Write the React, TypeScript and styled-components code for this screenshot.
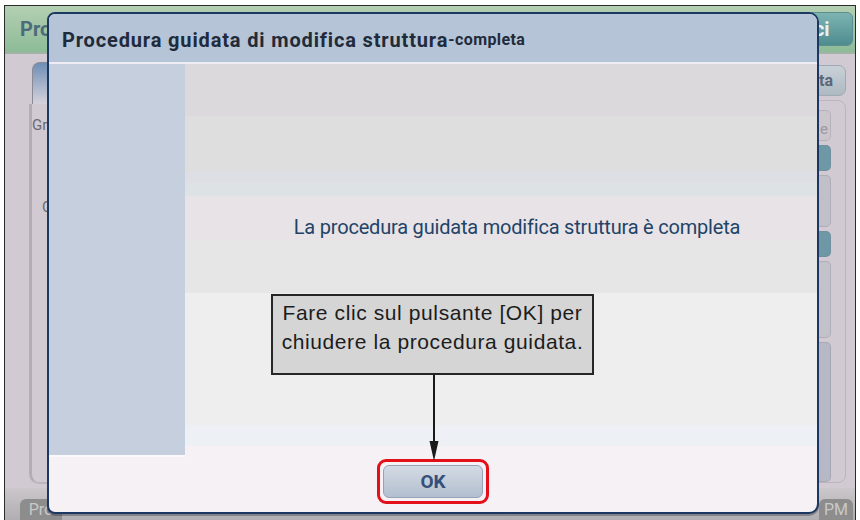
import styled, { createGlobalStyle } from 'styled-components'

const GlobalStyle = createGlobalStyle`
  html, body {
    margin: 0;
    padding: 0;
    background: #ffffff;
  }
  body {
    font-family: Roboto, "Liberation Sans", sans-serif;
  }
  * {
    box-sizing: border-box;
  }
`

// --- background application (mostly hidden by the dialog) ---

const Screen = styled.div`
  position: relative;
  width: 860px;
  height: 520px;
  padding: 5px 4px 0 4px;
  overflow: hidden;
`

const Device = styled.div`
  display: flex;
  flex-direction: column;
  height: 515px;
  border: 1px solid #2b2b2b;
  border-bottom: none;
  background: #d2cad2;
`

const Header = styled.header`
  height: 48px;
  flex: none;
  display: flex;
  align-items: center;
  justify-content: space-between;
  padding: 0 2px 0 15px;
  background: linear-gradient(#b4cfb3, #8dbb97);
  border-bottom: 2px solid #a2b4a6;
`

const HeaderTitle = styled.div`
  white-space: nowrap;
  font-weight: 700;
  font-size: 20px;
  color: #4d6b7b;
`

const ExitButton = styled.div`
  width: 84px;
  height: 34px;
  display: flex;
  align-items: center;
  justify-content: center;
  border-radius: 6px;
  border: 1px solid #5e8f90;
  background: linear-gradient(#7db4b2, #4e8c90);
  color: #e8f0f2;
  font-weight: 700;
  font-size: 20px;
`

const Main = styled.div`
  flex: 1;
  display: flex;
`

const LeftPane = styled.div`
  width: 44px;
  display: flex;
  flex-direction: column;
  padding: 8px 0 4px 24px;
`

const Tab = styled.div`
  height: 42px;
  width: 40px;
  margin-left: 3px;
  border: 1px solid #8a8a96;
  border-bottom: none;
  border-radius: 8px 8px 0 0;
  background: linear-gradient(#6f8fb6, #d6d2dc);
`

const LeftPanel = styled.div`
  flex: 1;
  border-left: 3px solid #b3aeb4;
  border-bottom: 2px solid #bbb6bc;
  border-radius: 0 0 0 10px;
  padding: 12px 0 0 0;
  display: flex;
  flex-direction: column;
  gap: 64px;
  white-space: nowrap;
`

const Label = styled.div<{ $indent?: number }>`
  font-size: 15px;
  color: #6a6a72;
  padding-left: ${(p) => p.$indent ?? 0}px;
`

const Middle = styled.div`
  flex: 1;
`

const RightPane = styled.div`
  width: 80px;
  display: flex;
  flex-direction: column;
  gap: 4px;
  padding: 11px 9px 0 0;
`

const SmallButton = styled.div`
  height: 31px;
  display: flex;
  align-items: center;
  justify-content: flex-end;
  padding-right: 12px;
  border-radius: 7px;
  border: 1px solid #9eaab4;
  background: linear-gradient(#c9d0d8, #aeb9c2);
  color: #5a6878;
  font-weight: 700;
  font-size: 16px;
  white-space: nowrap;
`

const SidePanel = styled.div`
  height: 383px;
  border: 1px solid #bdb5bd;
  border-radius: 8px;
  padding: 9px 14px 0 0;
  display: flex;
  flex-direction: column;
  gap: 4px;
`

const Block = styled.div<{ $h: number; $bg: string; $fg?: string }>`
  height: ${(p) => p.$h}px;
  background: ${(p) => p.$bg};
  border-radius: 5px;
  border: 1px solid rgba(120, 120, 140, 0.25);
  color: ${(p) => p.$fg ?? 'transparent'};
  font-size: 15px;
  display: flex;
  align-items: flex-end;
  justify-content: flex-end;
  padding: 0 2px 2px 0;
`

const Footer = styled.footer`
  height: 32px;
  flex: none;
  display: flex;
  justify-content: space-between;
  align-items: flex-end;
  padding: 0 2px 0 15px;
  background: linear-gradient(#cbc7cb, #b0aeb0);
`

const FooterTab = styled.div<{ $w: number }>`
  width: ${(p) => p.$w}px;
  height: 21px;
  border-radius: 6px 6px 0 0;
  background: #8d8d8d;
  color: #c9c9c9;
  font-size: 16px;
  display: flex;
  align-items: center;
  justify-content: center;
`

// --- dialog ---

const Dialog = styled.section`
  position: absolute;
  left: 47px;
  top: 12px;
  width: 772px;
  height: 502px;
  display: flex;
  flex-direction: column;
  border: 2px solid #1c3762;
  border-radius: 8px 10px 10px 8px;
  overflow: hidden;
  background: #f5f1f5;
  box-shadow: 0 2px 0 rgba(40, 40, 60, 0.35);
`

const TitleBar = styled.div`
  height: 50px;
  flex: none;
  display: flex;
  align-items: center;
  padding: 3px 0 0 13px;
  background: #b5c4d6;
  border-bottom: 2px solid #efecf3;
  color: #1f2b3b;
  font-weight: 700;
  white-space: nowrap;
`

const TitleMain = styled.span`
  font-size: 20px;
  letter-spacing: 0.85px;
`

const TitleSub = styled.span`
  font-size: 16px;
  letter-spacing: 0.4px;
`

const Body = styled.div`
  height: 393px;
  flex: none;
  display: flex;
  border-bottom: 2px solid #fbf9fb;
`

const Sidebar = styled.aside`
  width: 136px;
  background: #c5cfdd;
`

const Content = styled.div`
  flex: 1;
  display: flex;
  flex-direction: column;
`

const Band = styled.div<{ $h: number; $bg: string }>`
  height: ${(p) => p.$h}px;
  flex: none;
  background: ${(p) => p.$bg};
`

const MessageBand = styled(Band)`
  display: flex;
  align-items: center;
  justify-content: center;
  padding: 17px 0 0 32px;
  color: #1f4468;
  font-size: 20px;
  letter-spacing: -0.2px;
`

const ButtonRow = styled.div`
  flex: 1;
  display: flex;
  justify-content: center;
  align-items: flex-start;
  padding-top: 2px;
`

const Highlight = styled.div`
  padding: 3px;
  border: 3px solid #e3101a;
  border-radius: 9px;
`

const OkButton = styled.button`
  width: 100px;
  height: 33px;
  border: 1px solid #93a3b8;
  border-radius: 6px;
  background: linear-gradient(#d3dae4, #b3bfcf);
  color: #34507a;
  font-family: Roboto, "Liberation Sans", sans-serif;
  font-weight: 700;
  font-size: 19px;
  padding: 0;
`

// annotation laid over the dialog
const Callout = styled.div`
  position: absolute;
  left: 222px;
  top: 280px;
  width: 323px;
  display: flex;
  flex-direction: column;
  align-items: center;
  z-index: 2;
`

const CalloutBox = styled.div`
  width: 323px;
  height: 81px;
  padding-top: 2px;
  border: 2px solid #262626;
  background: #d5d5d5;
  color: #1c1c1c;
  font-family: "Liberation Sans", Arial, sans-serif;
  font-size: 21px;
  letter-spacing: 0.6px;
  line-height: 29px;
  text-align: center;
`

const Arrow = () => (
  <svg width="12" height="86" viewBox="0 0 12 86" style={{ display: 'block', marginLeft: 3 }}>
    <line x1="6" y1="0" x2="6" y2="70" stroke="#1a1a1a" strokeWidth="2" />
    <polygon points="1.5,66 10.5,66 6,86" fill="#1a1a1a" />
  </svg>
)

const bands = [
  { h: 52, bg: '#dcd9dc' },
  { h: 55, bg: '#dfdedf' },
  { h: 12, bg: '#dedfe5' },
  { h: 13, bg: '#dde2e5' },
]

const lowerBands = [
  { h: 52, bg: '#e6e6e6' },
  { h: 132, bg: '#eeeeee' },
  { h: 21, bg: '#edf1f6' },
  { h: 11, bg: '#f5f1f5' },
]

export default function App() {
  return (
    <>
      <GlobalStyle />
      <Screen>
        <Device>
          <Header>
            <HeaderTitle>Pro</HeaderTitle>
            <ExitButton>Esci</ExitButton>
          </Header>
          <Main>
            <LeftPane>
              <Tab />
              <LeftPanel>
                <Label>Gr</Label>
                <Label $indent={10}>C</Label>
              </LeftPanel>
            </LeftPane>
            <Middle />
            <RightPane>
              <SmallButton>Lista</SmallButton>
              <SidePanel>
                <Block $h={31} $bg="#cbc6cc" $fg="#9a98a0">e</Block>
                <Block $h={26} $bg="#6f98a6" />
                <Block $h={52} $bg="#c1bfc8" />
                <Block $h={26} $bg="#6f98a6" />
                <Block $h={78} $bg="#c3c1c9" />
                <Block $h={140} $bg="#b6b9c5" />
              </SidePanel>
            </RightPane>
          </Main>
          <Footer>
            <FooterTab $w={42}>Pro</FooterTab>
            <FooterTab $w={34}>PM</FooterTab>
          </Footer>
        </Device>

        <Dialog>
          <TitleBar>
            <TitleMain>Procedura guidata di modifica struttura</TitleMain>
            <TitleSub>-completa</TitleSub>
          </TitleBar>
          <Body>
            <Sidebar />
            <Content>
              {bands.map((b, i) => (
                <Band key={i} $h={b.h} $bg={b.bg} />
              ))}
              <MessageBand $h={45} $bg="#e8e3e6">
                La procedura guidata modifica struttura è completa
              </MessageBand>
              {lowerBands.map((b, i) => (
                <Band key={i} $h={b.h} $bg={b.bg} />
              ))}
            </Content>
          </Body>
          <ButtonRow>
            <Highlight>
              <OkButton>OK</OkButton>
            </Highlight>
          </ButtonRow>
          <Callout>
            <CalloutBox>
              Fare clic sul pulsante [OK] per
              <br />
              chiudere la procedura guidata.
            </CalloutBox>
            <Arrow />
          </Callout>
        </Dialog>
      </Screen>
    </>
  )
}
